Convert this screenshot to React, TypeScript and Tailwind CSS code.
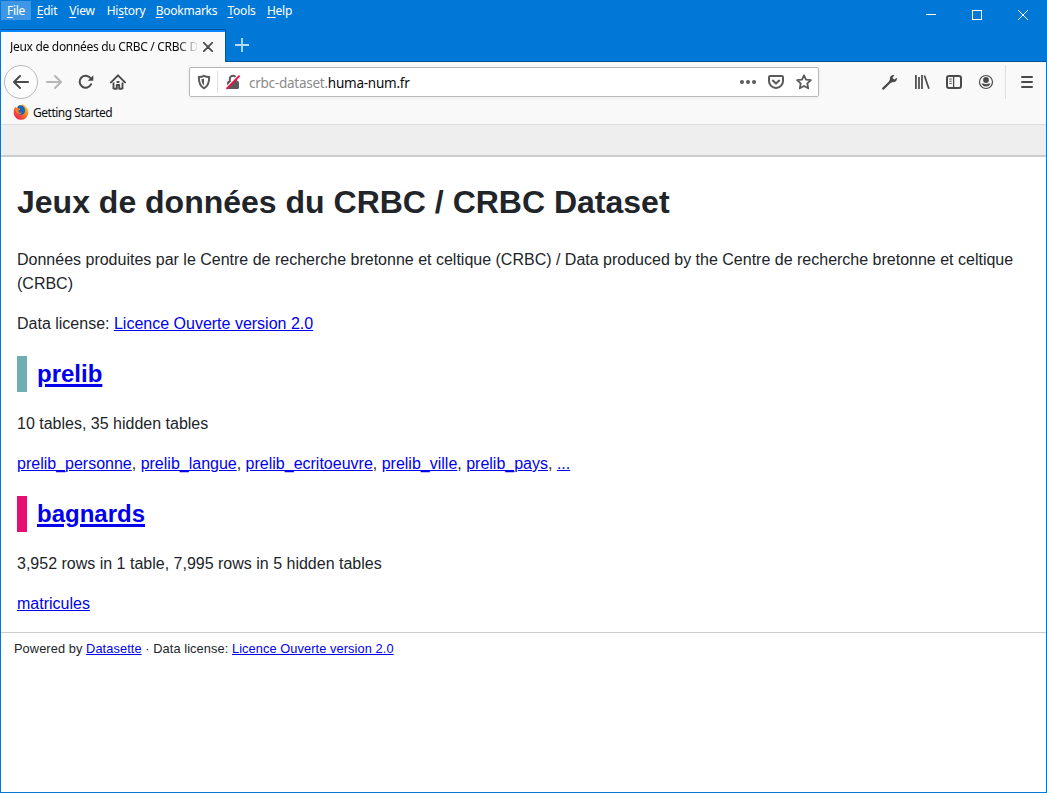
import type { ReactNode } from "react";

const menus = [
  { before: "", key: "F", after: "ile", width: "w-[30px]", active: true },
  { before: "", key: "E", after: "dit", width: "w-[32px]" },
  { before: "", key: "V", after: "iew", width: "w-[38px]" },
  { before: "Hi", key: "s", after: "tory", width: "w-[50px]" },
  { before: "", key: "B", after: "ookmarks", width: "w-[71px]" },
  { before: "", key: "T", after: "ools", width: "w-[39px]" },
  { before: "", key: "H", after: "elp", width: "w-[37px]" },
];

const databases = [
  {
    name: "prelib",
    bar: "border-[#70aeb4]",
    summary: "10 tables, 35 hidden tables",
    tables: ["prelib_personne", "prelib_langue", "prelib_ecritoeuvre", "prelib_ville", "prelib_pays", "..."],
  },
  {
    name: "bagnards",
    bar: "border-[#e70e71]",
    summary: "3,952 rows in 1 table, 7,995 rows in 5 hidden tables",
    tables: ["matricules"],
  },
];

function Icon({ children, className = "" }: { children: ReactNode; className?: string }) {
  return (
    <svg
      viewBox="0 0 16 16"
      className={`h-4 w-4 shrink-0 ${className}`}
      fill="none"
      stroke="currentColor"
      strokeWidth="2"
      strokeLinecap="round"
      strokeLinejoin="round"
    >
      {children}
    </svg>
  );
}

function Link({ children, className = "" }: { children: ReactNode; className?: string }) {
  return (
    <a href="#" className={`text-[#0000ee] underline ${className}`}>
      {children}
    </a>
  );
}

function TitleBar() {
  return (
    <div className="flex h-[29px] justify-between text-white">
      <div className="flex pt-px text-[12px] tracking-[-0.25px]">
        {menus.map((m) => (
          <div
            key={m.key + m.after}
            className={`h-[19px] whitespace-nowrap text-center leading-[20px] ${m.width} ${
              m.active ? "bg-[#3d97e4]" : ""
            }`}
          >
            {m.before}
            <span className="underline underline-offset-2">{m.key}</span>
            {m.after}
          </div>
        ))}
      </div>
      <div className="flex gap-[36px] pr-[18px] pt-[10px]">
        <svg className="h-[10px] w-[10px]" viewBox="0 0 10 10" shapeRendering="crispEdges">
          <path d="M0 4h10v1H0z" fill="#fff" />
        </svg>
        <svg className="h-[10px] w-[10px]" viewBox="0 0 10 10" shapeRendering="crispEdges">
          <rect x=".5" y=".5" width="9" height="9" fill="none" stroke="#fff" />
        </svg>
        <svg className="h-[10px] w-[10px]" viewBox="0 0 10 10">
          <path d="M0 0l10 10M10 0L0 10" stroke="#fff" />
        </svg>
      </div>
    </div>
  );
}

function TabBar() {
  return (
    <div className="flex h-[33px]">
      <div className="flex w-[225px] flex-col border-r border-t border-[#00549a] bg-[#f9f9fa]">
        <div className="h-[2px] bg-[#0a84ff]" />
        <div className="flex h-[30px] items-center pl-[9px] text-[12px] text-[#0c0c0d]">
          <div className="w-[187px] overflow-hidden whitespace-nowrap tracking-[-0.3px] [mask-image:linear-gradient(to_right,black_168px,transparent_189px)]">
            Jeux de données du CRBC / CRBC Dataset
          </div>
          <svg viewBox="0 0 10 10" className="ml-[6px] h-[10px] w-[10px]">
            <path d="M.7.7l8.6 8.6M9.3.7L.7 9.3" stroke="#4a4a4b" strokeWidth="1.7" strokeLinecap="round" />
          </svg>
        </div>
      </div>
      <div className="flex-1 border-b border-[#00549a] pl-[9px] pt-[9px]">
        <svg viewBox="0 0 14 14" className="h-[14px] w-[14px]">
          <path d="M7 0v14M0 7h14" stroke="#b9dcf8" strokeWidth="1.8" />
        </svg>
      </div>
    </div>
  );
}

function AddressBar() {
  return (
    <div className="ml-[63px] flex h-[30px] w-[630px] items-center rounded-[2px] border border-[#b8b8b9] bg-white shadow-[0_1px_4px_rgba(0,0,0,0.06)]">
      <Icon className="ml-[6px] text-[#59595a]">
        <path d="M8 1.8c1.6.9 3.2 1.2 5.2 1.3 0 5.2-.7 9-5.2 11.2C3.500 12.100 2.800 8.300 2.800 3.100 4.800 3 6.400 2.700 8 1.800z" />
        <path d="M8 4.400C7.200 4.800 6.500 5 5.500 5.100c.1 3.200.6 5 2.500 6.500z" fill="currentColor" stroke="none" />
      </Icon>
      <div className="ml-[5px] h-[22px] w-px bg-[#dedede]" />
      <svg viewBox="0 0 16 16" className="ml-[7px] h-4 w-4 shrink-0">
        <path d="M4.800 8V5a3.200 3.200 0 0 1 6.400 0v3" fill="none" stroke="#59595a" strokeWidth="2" />
        <rect x="2" y="7" width="12" height="8" rx="1.500" fill="#59595a" />
        <path d="M.2 14.800L13.600 1.400" stroke="#fff" strokeWidth="2.200" />
        <path d="M1.500 14.800L14.600 1.700" stroke="#f80a45" strokeWidth="1.900" />
      </svg>
      <div className="ml-[8px] flex-1 whitespace-nowrap pt-[2px] text-[13.500px] tracking-[-0.25px] text-[#8a8a8b]">
        crbc-dataset.<span className="text-[#0c0c0d]">huma-num.fr</span>
      </div>
      <div className="flex gap-3 pr-[6px] text-[#59595a]">
        <Icon>
          <g fill="currentColor" stroke="none">
            <circle cx="2" cy="8" r="2" />
            <circle cx="8" cy="8" r="2" />
            <circle cx="14" cy="8" r="2" />
          </g>
        </Icon>
        <Icon>
          <path d="M2.300 2h11.400c.7 0 1.300.5 1.300 1.200v3.700a7 7 0 0 1-14 0V3.200C1 2.500 1.600 2 2.300 2z" />
          <path d="M4.800 6.600L8 9.600l3.200-3" />
        </Icon>
        <Icon>
          <path
            d="M8 1.300l2 4.300 4.900.6-3.600 3.200.9 4.900L8 12l-4.200 2.300.9-4.900L1.100 6.200 6 5.600z"
            strokeWidth="1.800"
          />
        </Icon>
      </div>
    </div>
  );
}

function NavBar() {
  return (
    <div className="flex h-[40px] items-center text-[#4a4a4b]">
      <div className="ml-[3px] flex h-[34px] w-[34px] items-center justify-center rounded-full border border-[#b8b8b9] bg-[#fcfcfc]">
        <Icon>
          <path d="M15 8H1.500M7 2L1 8l6 6" />
        </Icon>
      </div>
      <Icon className="ml-[8px] text-[#b6b6b7]">
        <path d="M1 8h13.500M9 2l6 6-6 6" />
      </Icon>
      <Icon className="ml-4">
        <path d="M13.100 10.200A6 6 0 1 1 12.600 4.300" />
        <path d="M15.300 1.200v5.600H9.700z" fill="currentColor" stroke="none" />
      </Icon>
      <Icon className="ml-4">
        <path d="M1 8.400L8 1.400l7 7" />
        <path d="M3.500 8.500V15M12.500 8.500V15M3.500 14.800h3.300V11h2.400v3.800h3.300" strokeWidth="1.900" strokeLinecap="butt" />
        <path d="M6.600 7h2.800v2H6.600z" fill="currentColor" stroke="none" />
      </Icon>
      <AddressBar />
      <Icon className="ml-[63px]">
        <path d="M1.200 14.600L9 7" strokeWidth="2.200" />
        <path
          d="M14.900 3.700l-2.700 1.900-1.700-1.700L12.400 1C9.700.5 7.500 2.500 7.900 5.200L7 7.800 8.300 9l2.600-.9c2.600.3 4.500-1.900 4-4.400z"
          fill="currentColor"
          stroke="none"
        />
      </Icon>
      <Icon className="ml-4">
        <path d="M1.900 1v14M5 3v12M8 1v14" strokeWidth="1.700" strokeLinecap="butt" />
        <path d="M10.400 1.500l4.500 13.200" strokeWidth="1.700" strokeLinecap="butt" />
      </Icon>
      <Icon className="ml-4">
        <rect x="1" y="2" width="14" height="12" rx="2" />
        <path d="M7.600 2v12" strokeWidth="1.300" />
        <path d="M3.300 5h2.400M3.300 7.200h2.400M3.300 9.400h2.400" strokeWidth="1" strokeLinecap="butt" />
      </Icon>
      <Icon className="ml-4">
        <circle cx="8" cy="8" r="6.500" strokeWidth="1.200" />
        <circle cx="8" cy="6" r="2.900" fill="currentColor" stroke="none" />
        <path d="M3.500 9.600h2c1.500 1 3.500 1 5 0h2A4.900 4.900 0 0 1 3.500 9.600z" fill="currentColor" stroke="none" />
      </Icon>
      <div className="ml-[11px] h-[34px] w-px bg-[#dedede]" />
      <Icon className="ml-[13px]">
        <path d="M3 3h10M3 8h10M3 13h10" />
      </Icon>
    </div>
  );
}

function BookmarksBar() {
  return (
    <div className="flex h-[23px] items-center border-b border-[#dcdcdd] pb-[2px] pl-3 text-[12px] tracking-[-0.48px] text-[#0c0c0d]">
      <svg viewBox="0 0 16 16" className="mr-1 h-4 w-4">
        <defs>
          <linearGradient id="flame" x1="1" y1="0" x2="0.200" y2="1">
            <stop offset="0" stopColor="#ffe12e" />
            <stop offset=".45" stopColor="#ff8a16" />
            <stop offset="1" stopColor="#e8175d" />
          </linearGradient>
        </defs>
        <path d="M9.500.3c2.600 1.500 5.900 4 5.900 8.100A7.400 7.400 0 0 1 .6 8.400c0-2.200.6-4.300 2-5.700l.8 1.200z" fill="url(#flame)" />
        <path d="M4.600 2.500C6 .8 8.700.8 10.300 2.200c2.200 1.800 2.500 5.300.8 7.200-1.700 1.800-4.800 1.700-6.200-.2z" fill="#1764c0" />
        <path d="M3.200 3.700l2.200.7 2.100.1-.9 1.500-1.300.8.7 1.600c1 .7 2.200.3 3 .2-.8 1.700-3.700 1.900-5 .4-1.200-1.400-1.500-3.500-.8-5.300z" fill="#ff7a20" />
      </svg>
      <span className="pt-[2px]">Getting Started</span>
    </div>
  );
}

export default function App() {
  return (
    <div className="flex h-[793px] w-[1047px] flex-col overflow-hidden border-x border-b border-[#0078d7] bg-white font-['Noto_Sans','Open_Sans',sans-serif]">
      <div className="bg-[#0078d7]">
        <TitleBar />
        <TabBar />
      </div>
      <div className="bg-[#f9f9fa]">
        <NavBar />
        <BookmarksBar />
      </div>

      <div className="flex-1 font-['Liberation_Sans',Arial,sans-serif] text-[16px] leading-6 text-[#212529]">
        <header className="h-[32px] border-b-2 border-[#cccccc] bg-[#eeeeee]" />
        <main className="px-4 pb-[16px] pt-[21px]">
          <h1 className="mb-[22px] text-[32px] font-bold leading-[48px]">Jeux de données du CRBC / CRBC Dataset</h1>
          <p className="mb-4">
            Données produites par le Centre de recherche bretonne et celtique (CRBC) / Data produced by the Centre de
            recherche bretonne et celtique (CRBC)
          </p>
          <p>
            Data license: <Link>Licence Ouverte version 2.0</Link>
          </p>
          {databases.map((db) => (
            <section key={db.name}>
              <h2 className={`mb-[20px] mt-[20px] border-l-10 pl-[10px] text-[24px] font-bold leading-9 ${db.bar}`}>
                <Link className="decoration-[3px]">{db.name}</Link>
              </h2>
              <p className="mb-4">{db.summary}</p>
              <p>
                {db.tables.map((table, i) => (
                  <span key={table}>
                    {i > 0 && ", "}
                    <Link>{table}</Link>
                  </span>
                ))}
              </p>
            </section>
          ))}
        </main>
        <footer className="border-t border-[#cccccc] px-[13px] pt-[6px] text-[12.800px] leading-[19px] tracking-[0.085px]">
          Powered by <Link>Datasette</Link> · Data license: <Link>Licence Ouverte version 2.0</Link>
        </footer>
      </div>
    </div>
  );
}
